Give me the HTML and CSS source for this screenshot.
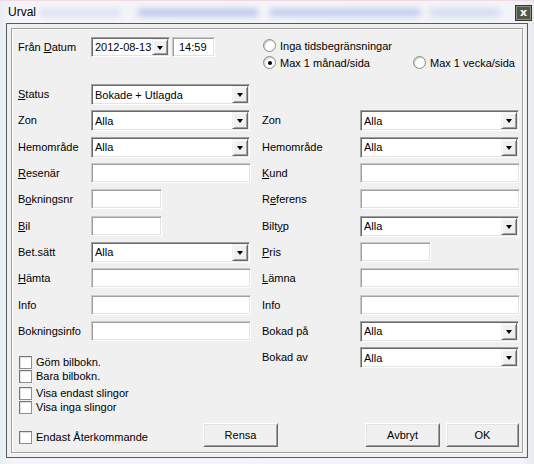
FILE: index.html
```html
<!DOCTYPE html>
<html lang="sv">
<head>
<meta charset="utf-8">
<title>Urval</title>
<link rel="stylesheet" href="styles.css">
</head>
<body>
<div class="window">
  <div class="titlebar">
    <span class="title">Urval</span>
    <div class="blur b1"></div>
    <div class="blur b2"></div>
    <div class="blur b3"></div>
    <div class="blur b4"></div>
    <div class="close">x</div>
  </div>
  <div class="frame">
    <div class="group">
      <div class="header">
        <div class="datefield">
          <span class="lbl lbl-left">Från <u>D</u>atum</span>
          <div class="combo date"><span class="val">2012-08-13</span><span class="ddbtn"><span class="tri"></span></span></div>
          <div class="textbox time"><span class="val">14:59</span></div>
        </div>
        <div class="radios">
          <div class="radio-row">
            <span class="radio"><span class="rb"></span>Inga tidsbegränsningar</span>
          </div>
          <div class="radio-row">
            <span class="radio first"><span class="rb checked"></span>Max 1 månad/sida</span>
            <span class="radio"><span class="rb"></span>Max 1 vecka/sida</span>
          </div>
        </div>
      </div>
      <div class="cols">
        <div class="col col-left">
          <div class="row"><span class="lbl lbl-left"><u>S</u>tatus</span><div class="combo wide"><span class="val">Bokade + Utlagda</span><span class="ddbtn"><span class="tri"></span></span></div></div>
          <div class="row"><span class="lbl lbl-left">Zon</span><div class="combo wide"><span class="val">Alla</span><span class="ddbtn"><span class="tri"></span></span></div></div>
          <div class="row"><span class="lbl lbl-left">Hemområde</span><div class="combo wide"><span class="val">Alla</span><span class="ddbtn"><span class="tri"></span></span></div></div>
          <div class="row"><span class="lbl lbl-left"><u>R</u>esenär</span><div class="textbox wide"></div></div>
          <div class="row"><span class="lbl lbl-left">B<u>o</u>kningsnr</span><div class="textbox short"></div></div>
          <div class="row"><span class="lbl lbl-left"><u>B</u>il</span><div class="textbox short"></div></div>
          <div class="row"><span class="lbl lbl-left">Bet.sätt</span><div class="combo wide"><span class="val">Alla</span><span class="ddbtn"><span class="tri"></span></span></div></div>
          <div class="row"><span class="lbl lbl-left"><u>H</u>ämta</span><div class="textbox wide"></div></div>
          <div class="row"><span class="lbl lbl-left">Info</span><div class="textbox wide"></div></div>
          <div class="row"><span class="lbl lbl-left">Bokningsinfo</span><div class="textbox wide"></div></div>
          <div class="checks">
            <div class="check"><span class="cb"></span>Göm bilbokn.</div>
            <div class="check"><span class="cb"></span>Bara bilbokn.</div>
            <div class="check gap"><span class="cb"></span>Visa endast slingor</div>
            <div class="check"><span class="cb"></span>Visa inga slingor</div>
          </div>
        </div>
        <div class="col col-right">
          <div class="row"></div>
          <div class="row"><span class="lbl lbl-right">Zon</span><div class="combo wide"><span class="val">Alla</span><span class="ddbtn"><span class="tri"></span></span></div></div>
          <div class="row"><span class="lbl lbl-right">Hemområde</span><div class="combo wide"><span class="val">Alla</span><span class="ddbtn"><span class="tri"></span></span></div></div>
          <div class="row"><span class="lbl lbl-right"><u>K</u>und</span><div class="textbox wide"></div></div>
          <div class="row"><span class="lbl lbl-right">R<u>e</u>ferens</span><div class="textbox wide"></div></div>
          <div class="row"><span class="lbl lbl-right">Bilt<u>y</u>p</span><div class="combo wide"><span class="val">Alla</span><span class="ddbtn"><span class="tri"></span></span></div></div>
          <div class="row"><span class="lbl lbl-right"><u>P</u>ris</span><div class="textbox short"></div></div>
          <div class="row"><span class="lbl lbl-right"><u>L</u>ämna</span><div class="textbox wide"></div></div>
          <div class="row"><span class="lbl lbl-right">Info</span><div class="textbox wide"></div></div>
          <div class="row"><span class="lbl lbl-right">Bokad på</span><div class="combo wide"><span class="val">Alla</span><span class="ddbtn"><span class="tri"></span></span></div></div>
          <div class="row"><span class="lbl lbl-right">Bokad av</span><div class="combo wide"><span class="val">Alla</span><span class="ddbtn"><span class="tri"></span></span></div></div>
        </div>
      </div>
      <div class="footer">
        <div class="check footer-check"><span class="cb"></span>Endast Återkommande</div>
        <div class="btn">Rensa</div>
        <div class="btn-group">
          <div class="btn">Avbryt</div>
          <div class="btn ok">OK</div>
        </div>
      </div>
    </div>
  </div>
</div>
</body>
</html>
```

FILE: styles.css
```css
* { box-sizing: border-box; }

body {
  margin: 0;
  font-family: "Liberation Sans", Arial, sans-serif;
  font-size: 11px;
  color: #000;
}

.window {
  width: 534px;
  height: 464px;
  background: linear-gradient(90deg, #e9edf5 0, #f4f5f8 12px, #f3f4f7 520px, #e6e9ee 100%);
  position: relative;
  overflow: hidden;
}

.titlebar {
  height: 23px;
  display: flex;
  align-items: center;
  padding-left: 8px;
  position: relative;
  border-top: 1px solid #f2d9e2;
}

.title {
  font-size: 12px;
  color: #000;
  position: relative;
  z-index: 1;
}

.blur {
  position: absolute;
  top: 8px;
  height: 7px;
  background: #8fa3ea;
  filter: blur(3px);
  opacity: 0.45;
}
.b1 { left: 40px; width: 80px; opacity: 0.25; }
.b2 { left: 138px; width: 120px; background: #6f86e0; }
.b3 { left: 270px; width: 150px; background: #7b8fe2; }
.b4 { left: 430px; width: 70px; opacity: 0.35; }

.close {
  position: absolute;
  right: 2px;
  top: 4px;
  width: 17px;
  height: 16px;
  background: #545848;
  border: 1px solid #35372e;
  box-shadow: inset 0 0 0 1px #8d917f;
  color: #fff;
  font-family: "DejaVu Sans", sans-serif;
  font-weight: bold;
  font-size: 11px;
  line-height: 13px;
  text-align: center;
}

.frame {
  margin: 0 6px;
  height: 435px;
  border: 1px solid #5a5a5a;
  background: #f0f0f0;
  padding: 4px;
}

.group {
  height: 100%;
  border: 1px solid #a0a0a0;
  box-shadow: inset 1px 1px 0 #fff, 1px 1px 0 #fff;
  padding: 8px 0 0 6px;
}

.header {
  display: flex;
  height: 47px;
}

.datefield {
  display: flex;
  align-items: flex-start;
  width: 245px;
}

.lbl {
  line-height: 20px;
  white-space: nowrap;
}
.lbl-left { width: 73px; }
.lbl-right { width: 98px; }

.combo, .textbox {
  position: relative;
  background: #fff;
  border-top: 1px solid #a0a0a0;
  border-left: 1px solid #a0a0a0;
  border-right: 1px solid #fff;
  border-bottom: 1px solid #fff;
  box-shadow: inset 1px 1px 0 #696969, inset -1px -1px 0 #e3e3e3;
  height: 21px;
  display: flex;
  align-items: center;
}

.textbox {
  height: 20px;
  box-shadow: inset 1px 1px 0 #a0a0a0, inset -1px -1px 0 #e3e3e3;
  border-top-color: #c8c8c8;
  border-left-color: #c8c8c8;
}

.val {
  padding-left: 3px;
  white-space: nowrap;
}

.combo .val { flex: 1; }

.ddbtn {
  width: 16px;
  height: 17px;
  margin-right: 1px;
  background: #f0f0f0;
  border-top: 1px solid #f0f0f0;
  border-left: 1px solid #f0f0f0;
  border-right: 1px solid #696969;
  border-bottom: 1px solid #696969;
  box-shadow: inset 1px 1px 0 #fff, inset -1px -1px 0 #a0a0a0;
  display: flex;
  align-items: center;
  justify-content: center;
}

.tri {
  width: 0;
  height: 0;
  border-left: 3.5px solid transparent;
  border-right: 3.5px solid transparent;
  border-top: 4px solid #000;
  margin-top: 1px;
}

.date { width: 79px; height: 20px; }
.date .ddbtn { height: 16px; }
.time { width: 43px; margin-left: 2px; }
.time .val { padding-left: 6px; }

.wide { width: 160px; }
.combo.wide { width: 159px; }
.short { width: 71px; }

.radios {
  display: flex;
  flex-direction: column;
}

.radio-row {
  display: flex;
  height: 17px;
  align-items: center;
}

.radio {
  display: inline-flex;
  align-items: center;
  gap: 4px;
  white-space: nowrap;
}

.radio.first { width: 150px; }

.rb {
  width: 13px;
  height: 13px;
  border-radius: 50%;
  border: 1px solid #8b8b8b;
  background: radial-gradient(circle at 60% 60%, #fff 40%, #e6e6e6 100%);
  box-shadow: inset 1px 1px 0 #cfcfcf;
  position: relative;
}

.rb.checked::after {
  content: "";
  position: absolute;
  left: 3.5px;
  top: 3.5px;
  width: 4px;
  height: 4px;
  border-radius: 50%;
  background: #000;
}

.cols {
  display: flex;
}

.col-left { width: 244px; }
.col-right { width: 258px; }

.row {
  display: flex;
  align-items: flex-start;
  height: 26.33px;
}

.checks {
  margin-top: 8px;
}

.check {
  display: flex;
  align-items: center;
  height: 14px;
  gap: 4px;
  padding-left: 1px;
  white-space: nowrap;
}

.check.gap { margin-top: 3px; }

.cb {
  width: 13px;
  height: 13px;
  background: #fff;
  border: 1px solid #8e8f8f;
  border-top-color: #767676;
  border-left-color: #767676;
  box-shadow: inset 1px 1px 0 #e0e0e0;
}

.footer {
  display: flex;
  align-items: center;
  width: 501px;
  height: 24px;
  margin-top: 9px;
}

.footer-check {
  width: 185px;
  margin-top: 4px;
}

.btn {
  width: 75px;
  height: 24px;
  background: #f0f0f0;
  border-top: 1px solid #fff;
  border-left: 1px solid #fff;
  border-right: 1px solid #696969;
  border-bottom: 1px solid #696969;
  box-shadow: inset 1px 1px 0 #e3e3e3, inset -1px -1px 0 #a0a0a0;
  display: flex;
  align-items: center;
  justify-content: center;
}

.btn-group {
  margin-left: auto;
  display: flex;
  gap: 6px;
}

.btn.ok { width: 73px; }
```
